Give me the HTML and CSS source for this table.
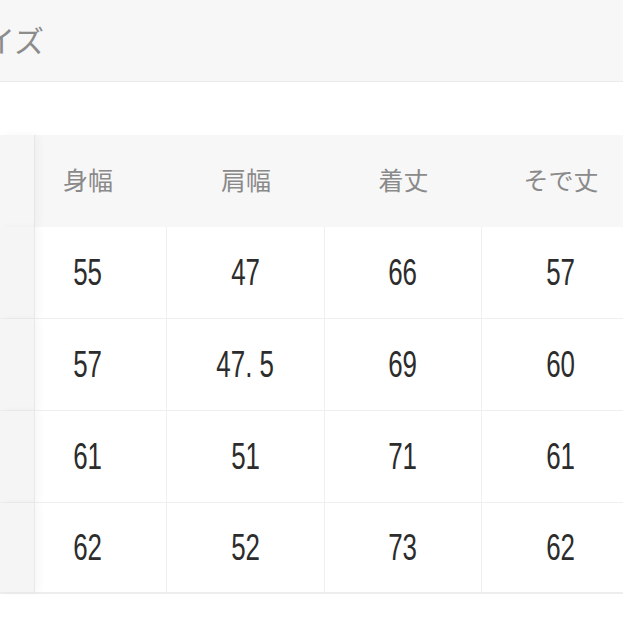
FILE: index.html
```html
<!DOCTYPE html>
<html lang="ja">
<head>
<meta charset="utf-8">
<link rel="stylesheet" href="styles.css">
</head>
<body>
<div class="page">
  <header class="title-bar"><h1 class="title">サイズ</h1></header>
  <div class="spacer"></div>
  <div class="table">
    <div class="row head">
      <div class="label"></div>
      <div class="cell first">身幅</div>
      <div class="cell">肩幅</div>
      <div class="cell">着丈</div>
      <div class="cell">そで丈</div>
    </div>
    <div class="row">
      <div class="label"></div>
      <div class="cell first"><span class="num">55</span></div>
      <div class="cell"><span class="num">47</span></div>
      <div class="cell"><span class="num">66</span></div>
      <div class="cell"><span class="num">57</span></div>
    </div>
    <div class="row">
      <div class="label"></div>
      <div class="cell first"><span class="num">57</span></div>
      <div class="cell"><span class="num">47. 5</span></div>
      <div class="cell"><span class="num">69</span></div>
      <div class="cell"><span class="num">60</span></div>
    </div>
    <div class="row">
      <div class="label"></div>
      <div class="cell first"><span class="num">61</span></div>
      <div class="cell"><span class="num">51</span></div>
      <div class="cell"><span class="num">71</span></div>
      <div class="cell"><span class="num">61</span></div>
    </div>
    <div class="row last">
      <div class="label"></div>
      <div class="cell first"><span class="num">62</span></div>
      <div class="cell"><span class="num">52</span></div>
      <div class="cell"><span class="num">73</span></div>
      <div class="cell"><span class="num">62</span></div>
    </div>
  </div>
</div>
</body>
</html>
```
FILE: styles.css
```css
html, body {
  margin: 0;
  padding: 0;
  background: #ffffff;
  overflow: hidden;
}
.page {
  width: 623px;
  height: 623px;
  overflow: hidden;
  font-family: "Noto Sans CJK JP", "Noto Sans", sans-serif;
}
.title-bar {
  height: 81px;
  background: #f7f7f7;
  border-bottom: 1px solid #ebebeb;
  display: flex;
  align-items: center;
  overflow: hidden;
}
.title {
  margin: 0 0 0 -45px;
  font-size: 30px;
  font-weight: 400;
  color: #8c8c8c;
  white-space: nowrap;
  line-height: 1;
  padding-bottom: 4px;
}
.spacer {
  height: 53px;
  background: #ffffff;
}
.table {
  display: flex;
  flex-direction: column;
  width: 640px;
}
.row {
  display: grid;
  grid-template-columns: 35px 132px 158px 157px 158px;
  height: 92px;
  border-bottom: 1px solid #efefef;
  box-sizing: border-box;
}
.row.last {
  border-bottom: 2px solid #ededed;
  height: 91px;
}
.row.head {
  background: #f7f7f7;
  border-bottom: none;
}
.label {
  background: #f5f5f5;
  border-right: 1px solid #e9e9e9;
  box-shadow: 4px 0 8px rgba(0, 0, 0, 0.035);
  position: relative;
  z-index: 1;
}
.head .label {
  background: #f6f6f6;
  border-right-color: #e6e6e6;
}
.cell {
  display: flex;
  align-items: center;
  justify-content: center;
  border-right: 1px solid #efefef;
  color: #2e2e2e;
}
.cell.first {
  padding-right: 26px;
}
.head .cell {
  border-right: none;
  color: #8a8a8a;
  font-size: 25px;
  line-height: 1;
  padding-bottom: 4px;
}
.num {
  display: inline-block;
  font-family: "Liberation Sans", "Noto Sans CJK JP", sans-serif;
  font-size: 37px;
  line-height: 1;
  transform: scaleX(0.7);
  color: #2c2c2c;
  white-space: nowrap;
}
```
